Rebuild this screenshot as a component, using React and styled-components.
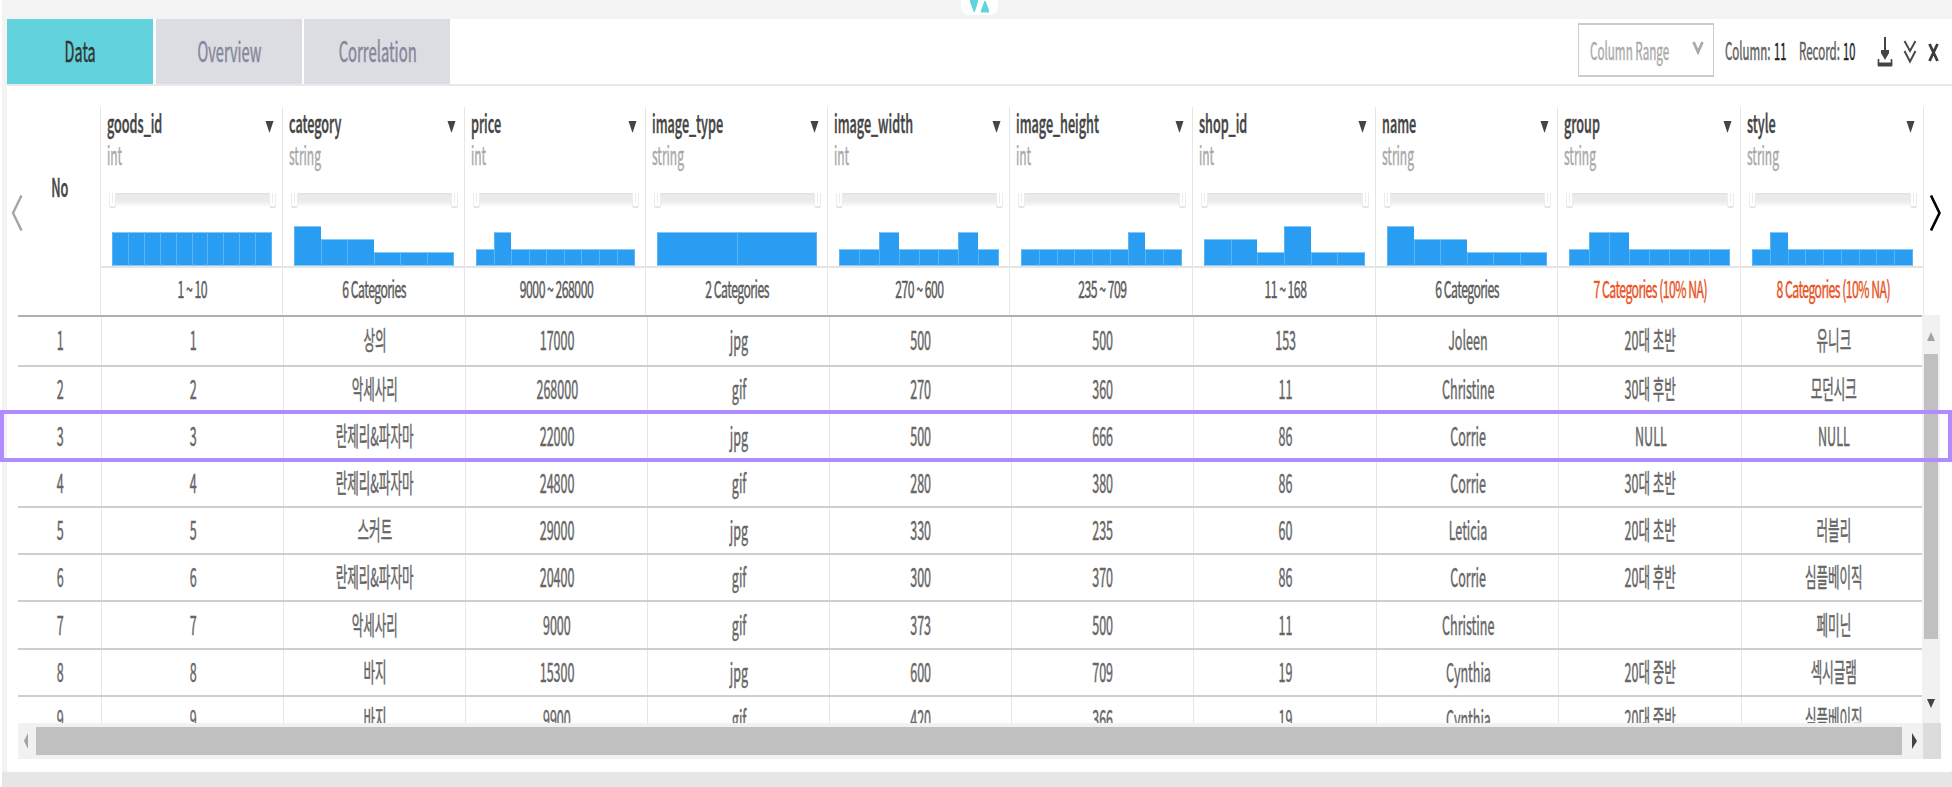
import React from "react";
import styled, { createGlobalStyle } from "styled-components";

const GlobalStyle = createGlobalStyle`
  * { box-sizing: border-box; }
  body {
    margin: 0;
    background: #fff;
    font-family: "Noto Sans CJK KR", "Noto Sans", sans-serif;
    overflow: hidden;
  }
`;

const LOW = 17;
const HIGH = 34;
const columns = [
  { name: "goods_id", type: "int", range: "1 ~ 10", bars: Array(10).fill(HIGH) },
  { name: "category", type: "string", range: "6 Categories", bars: [40, 27, 27, 14, 14, 14] },
  { name: "price", type: "int", range: "9000 ~ 268000", bars: [LOW, HIGH, LOW, LOW, LOW, LOW, LOW, LOW, LOW] },
  { name: "image_type", type: "string", range: "2 Categories", bars: [HIGH, HIGH] },
  { name: "image_width", type: "int", range: "270 ~ 600", bars: [LOW, LOW, HIGH, LOW, LOW, LOW, HIGH, LOW] },
  { name: "image_height", type: "int", range: "235 ~ 709", bars: [LOW, LOW, LOW, LOW, LOW, LOW, HIGH, LOW, LOW] },
  { name: "shop_id", type: "int", range: "11 ~ 168", bars: [27, 27, 14, 40, 14, 14] },
  { name: "name", type: "string", range: "6 Categories", bars: [40, 27, 27, 14, 14, 14] },
  { name: "group", type: "string", range: "7 Categories (10% NA)", warn: true, bars: [LOW, HIGH, HIGH, LOW, LOW, LOW, LOW, LOW] },
  { name: "style", type: "string", range: "8 Categories (10% NA)", warn: true, bars: [LOW, HIGH, LOW, LOW, LOW, LOW, LOW, LOW, LOW] },
];

const rows = [
  ["1", "1", "상의", "17000", "jpg", "500", "500", "153", "Joleen", "20대 초반", "유니크"],
  ["2", "2", "악세사리", "268000", "gif", "270", "360", "11", "Christine", "30대 후반", "모던시크"],
  ["3", "3", "란제리&파자마", "22000", "jpg", "500", "666", "86", "Corrie", "NULL", "NULL"],
  ["4", "4", "란제리&파자마", "24800", "gif", "280", "380", "86", "Corrie", "30대 초반", ""],
  ["5", "5", "스커트", "29000", "jpg", "330", "235", "60", "Leticia", "20대 초반", "러블리"],
  ["6", "6", "란제리&파자마", "20400", "gif", "300", "370", "86", "Corrie", "20대 후반", "심플베이직"],
  ["7", "7", "악세사리", "9000", "gif", "373", "500", "11", "Christine", "", "페미닌"],
  ["8", "8", "바지", "15300", "jpg", "600", "709", "19", "Cynthia", "20대 중반", "섹시글램"],
  ["9", "9", "바지", "9900", "gif", "420", "366", "19", "Cynthia", "20대 중반", "심플베이직"],
];

const Screen = styled.div`
  position: relative;
  width: 1952px;
  height: 787px;
  padding-left: 2px;
  display: flex;
  flex-direction: column;
  overflow: hidden;
`;

const TopStrip = styled.div`
  height: 19px;
  flex: none;
  background: #f3f3f3;
  padding-left: 959px;
`;

const SplitHandle = styled.div`
  width: 37px;
  height: 15px;
  background: #fff;
  border-radius: 0 0 8px 8px;
  svg { display: block; }
`;

const Middle = styled.div`
  flex: none;
  height: 753px;
  padding-left: 5px;
  background: #f3f3f3;
`;

const Panel = styled.div`
  height: 100%;
  background: #fff;
  border-radius: 0 0 4px 4px;
  display: flex;
  flex-direction: column;
`;

const BottomStrip = styled.div`
  flex: 1;
  background: #e6e6e6;
`;

const Toolbar = styled.div`
  display: flex;
  flex: none;
  height: 67px;
  border-bottom: 2px solid #e9e9e9;
`;

const Condensed = styled.span`
  display: inline-block;
  white-space: nowrap;
  flex: none;
  font-size: ${(p) => p.$size}px;
  line-height: 1;
  color: ${(p) => p.$color};
  font-weight: ${(p) => p.$weight || 400};
  letter-spacing: ${(p) => p.$spacing || 0}px;
  -webkit-text-stroke: 0.5px ${(p) => p.$color};
  transform: scaleX(${(p) => p.$scale || 0.5});
  transform-origin: ${(p) => p.$origin || "center"};
`;

const Tab = styled.div`
  width: 146px;
  height: 65px;
  margin-right: 2.5px;
  padding: 0 0 4px 1px;
  display: flex;
  align-items: center;
  justify-content: center;
  background: ${(p) => (p.$active ? "#62d3dc" : "#dcdde3")};
`;

const Tools = styled.div`
  margin-left: auto;
  display: flex;
  width: 374px;
`;

const RangeSelect = styled.div`
  width: 136px;
  flex: none;
  height: 54px;
  margin-top: 4px;
  border: 1px solid #ccc;
  border-width: 2px 1px;
  display: flex;
  align-items: center;
  padding: 0 10px 1px 11px;
  svg { flex: none; margin-bottom: 3px; }
`;

const LabelSlot = styled.div`
  width: ${(p) => p.$w}px;
  flex: none;
  display: flex;
`;

const Counter = styled.div`
  flex: none;
  display: flex;
  align-items: center;
  padding-bottom: 3px;
  margin-left: ${(p) => p.$gap}px;
`;

const IconButton = styled.div`
  width: ${(p) => p.$w}px;
  margin-left: ${(p) => p.$gap}px;
  flex: none;
  padding-top: ${(p) => p.$top}px;
  svg { display: block; }
`;

const HeaderArea = styled.div`
  flex: none;
  display: flex;
  height: 229px;
  padding-top: 21px;
`;

const PageArrow = styled.div`
  width: ${(p) => p.$w}px;
  flex: none;
  padding: 88px 0 0 ${(p) => p.$pad}px;
  svg { display: block; }
`;

const HeaderGrid = styled.div`
  display: grid;
  grid-template-columns: 83px 182px 182px 181px 182px 182px 183px 183px 182px 183px 183px;
  height: 208px;
`;

const NoHeader = styled.div`
  border-right: 1px solid #e6e6e6;
  padding: 67px 0 0 2px;
  display: flex;
  justify-content: center;
  align-items: flex-start;
`;

const ColumnHeader = styled.div`
  border-right: 1px solid #e6e6e6;
  display: flex;
  flex-direction: column;
  min-width: 0;
`;

const NameRow = styled.div`
  display: flex;
  justify-content: space-between;
  height: 32px;
  padding: 3px 8px 0 5.5px;
  svg { flex: none; margin-top: 11px; }
  span { width: 0; }
`;

const TypeRow = styled.div`
  height: 54px;
  padding: 3px 0 0 5.5px;
  display: flex;
`;

const Slider = styled.div`
  height: 16px;
  margin: 0 6px 0 8px;
  display: flex;
`;

const SliderTrack = styled.div`
  flex: 1;
  height: 13px;
  background: linear-gradient(#e0e0e0, #ebebeb 20%, #ebebeb 60%, #fafafa);
`;

const SliderThumb = styled.div`
  width: 7px;
  height: 15px;
  background: linear-gradient(90deg, transparent 40%, #ececec 40%, #ececec 60%, transparent 60%) no-repeat 0 0 / 100% 10px;
  border: 1px solid #ececec;
  border-top: none;
  border-bottom: 2px solid #e4e4e4;
  border-radius: 0 0 2px 2px;
`;

const Histogram = styled.div`
  height: 59px;
  padding: 0 10px 0 11px;
  display: flex;
  align-items: flex-end;
  border-bottom: 2px solid #e4e4e4;
`;

const Bar = styled.div`
  flex: 1;
  height: ${(p) => p.$h}px;
  background: #289df1;
  border-top: 1px solid #86c8f7;
  border-bottom: 1px solid #8ccbf8;
  border-left: 1px solid #5db4f4;
  &:last-child { border-right: 1px solid #5db4f4; }
`;

const RangeText = styled.div`
  flex: 1;
  display: flex;
  justify-content: center;
  align-items: center;
  padding: 0 0 6px 2px;
`;

const TableArea = styled.div`
  flex: none;
  width: 1923px;
  margin-left: 11px;
  display: flex;
  height: 408px;
`;

const Body = styled.div`
  width: 1904px;
  height: 408px;
  overflow: hidden;
  box-shadow: inset 0 2px 0 #b0b0b0;
  padding-top: 2px;
`;

const Row = styled.div`
  display: grid;
  grid-template-columns: 84px 182px 182px 182px 182px 182px 182px 183px 182px 183px 180px;
  height: ${(p) => (p.$first ? 50 : 47.1)}px;
  border-bottom: 2px solid #cecece;
`;

const Cell = styled.div`
  border-right: 1px solid #e6e6e6;
  display: flex;
  justify-content: center;
  align-items: center;
  padding: 0 0 ${(p) => (p.$first ? 5 : 3)}px 1px;
  min-width: 0;
  &:last-child { border-right: 0; padding-left: 3px; }
`;

const VScroll = styled.div`
  width: 18px;
  background: #f1f1f1;
  display: flex;
  flex-direction: column;
  align-items: center;
  padding-top: 17px;
  svg { flex: none; }
`;

const VThumb = styled.div`
  width: 14px;
  height: 285px;
  margin: 13px 0 60px;
  background: #c0c0c0;
`;

const HScroll = styled.div`
  flex: none;
  width: 1923px;
  height: 36px;
  margin-left: 11px;
  display: flex;
  align-items: center;
  background: #f1f1f1;
`;

const ScrollArrow = styled.div`
  width: ${(p) => p.$w}px;
  padding-left: ${(p) => p.$pad}px;
  flex: none;
  svg { display: block; }
`;

const HThumb = styled.div`
  flex: 1;
  height: 28px;
  background: #c0c0c0;
`;

const ScrollCorner = styled.div`
  width: 18px;
  height: 36px;
  background: #dcdcdc;
`;

const RowHighlight = styled.div`
  position: absolute;
  left: 0;
  top: 410px;
  width: 1952px;
  height: 52px;
  border: 4px solid #b18cff;
`;

const Triangle = ({ w, h, points, fill }) => (
  <svg width={w} height={h} viewBox={`0 0 ${w} ${h}`}>
    <polygon points={points} fill={fill} />
  </svg>
);

const Column = ({ column }) => (
  <ColumnHeader>
    <NameRow>
      <Condensed $size={25} $scale={0.505} $color="#444" $weight={500} $origin="left">{column.name}</Condensed>
      <Triangle w={9} h={12} points="0.5,0 8.5,0 4.5,12" fill="#444" />
    </NameRow>
    <TypeRow>
      <Condensed $size={25} $scale={0.48} $color="#a8a8a8" $origin="left">{column.type}</Condensed>
    </TypeRow>
    <Slider>
      <SliderThumb />
      <SliderTrack />
      <SliderThumb />
    </Slider>
    <Histogram>
      {column.bars.map((h, i) => <Bar key={i} $h={h} />)}
    </Histogram>
    <RangeText>
      <Condensed
        $size={23.5}
        $scale={0.52}
        $spacing={-1}
        $color={column.warn ? "#e8541f" : "#5c5c5c"}
      >
        {column.range}
      </Condensed>
    </RangeText>
  </ColumnHeader>
);

export default function App() {
  return (
    <Screen>
      <GlobalStyle />
      <TopStrip>
        <SplitHandle>
          <svg width="37" height="15">
            <polygon points="9,0 17,0 17,2 13.8,12 12.8,12 9,2" fill="#62d3dc" />
            <polygon points="20,12.5 20,10 23.5,1 24.5,1 28,10 28,12.5" fill="#62d3dc" />
          </svg>
        </SplitHandle>
      </TopStrip>
      <Middle>
        <Panel>
          <Toolbar>
            <Tab $active><Condensed $size={28} $scale={0.515} $color="#333">Data</Condensed></Tab>
            <Tab><Condensed $size={28} $scale={0.52} $color="#85879a">Overview</Condensed></Tab>
            <Tab><Condensed $size={28} $scale={0.53} $color="#85879a">Correlation</Condensed></Tab>
            <Tools>
              <RangeSelect>
                <LabelSlot $w={102}>
                  <Condensed $size={24} $scale={0.485} $color="#aaa" $origin="left">Column Range</Condensed>
                </LabelSlot>
                <svg width="12" height="15" viewBox="0 0 12 15" fill="none">
                  <path d="M1.5 1 L6 11 L10.5 1" stroke="#aaa" strokeWidth="2.8" />
                </svg>
              </RangeSelect>
              <Counter $gap={11}>
                <LabelSlot $w={49}>
                  <Condensed $size={24} $scale={0.48} $color="#606060" $origin="left">Column:</Condensed>
                </LabelSlot>
                <LabelSlot $w={13}>
                  <Condensed $size={24} $scale={0.46} $color="#222" $origin="left">11</Condensed>
                </LabelSlot>
              </Counter>
              <Counter $gap={12}>
                <LabelSlot $w={44}>
                  <Condensed $size={24} $scale={0.48} $color="#606060" $origin="left">Record:</Condensed>
                </LabelSlot>
                <LabelSlot $w={13}>
                  <Condensed $size={24} $scale={0.46} $color="#222" $origin="left">10</Condensed>
                </LabelSlot>
              </Counter>
              <IconButton $w={16} $gap={21} $top={17}>
                <svg width="16" height="32" viewBox="0 0 16 32" fill="none" stroke="#444">
                  <path d="M8 1 V18" strokeWidth="2" />
                  <path d="M4 14 H12 V17 L8 24 L4 17 Z" fill="#444" stroke="none" />
                  <path d="M1.5 23 V28.5 H14.5 V23" strokeWidth="1.6" />
                  <path d="M0.8 28.5 H15.2" strokeWidth="4" />
                </svg>
              </IconButton>
              <IconButton $w={14} $gap={10} $top={21}>
                <svg width="14" height="24" viewBox="0 0 14 24" fill="none" stroke="#4a4a4a" strokeWidth="2">
                  <path d="M1.5 1 L7 11 L12.5 1" />
                  <path d="M1.5 11 L7 21.5 L12.5 11" />
                </svg>
              </IconButton>
              <IconButton $w={11} $gap={11} $top={24}>
                <svg width="11" height="19" viewBox="0 0 11 19" stroke="#3c3c3c" strokeWidth="2.8">
                  <path d="M1.5 1 L9.5 18 M9.5 1 L1.5 18" />
                </svg>
              </IconButton>
            </Tools>
          </Toolbar>
          <HeaderArea>
            <PageArrow $w={11} $pad={4}>
              <svg width="13" height="36" viewBox="0 0 13 36" fill="none">
                <path d="M10.5 0.5 L2 18 L10.5 35.5" stroke="#a5a5a5" strokeWidth="2.4" />
              </svg>
            </PageArrow>
            <HeaderGrid>
              <NoHeader><Condensed $size={25} $scale={0.51} $color="#444" $weight={500}>No</Condensed></NoHeader>
              {columns.map((c) => <Column key={c.name} column={c} />)}
            </HeaderGrid>
            <PageArrow $w={28} $pad={6}>
              <svg width="13" height="36" viewBox="0 0 13 36" fill="none">
                <path d="M1 0.5 L9.5 18 L1 35.5" stroke="#000" strokeWidth="2.6" />
              </svg>
            </PageArrow>
          </HeaderArea>
          <TableArea>
            <Body>
              {rows.map((r, i) => (
                <Row key={r[0]} $first={i === 0}>
                  {r.map((v, j) => (
                    <Cell key={j} $first={i === 0}>
                      <Condensed $size={26} $scale={0.482} $color="#666">{v}</Condensed>
                    </Cell>
                  ))}
                </Row>
              ))}
            </Body>
            <VScroll>
              <Triangle w={8} h={9} points="0,9 4,0 8,9" fill="#a3a3a3" />
              <VThumb />
              <Triangle w={8} h={9} points="0,0 8,0 4,9" fill="#444" />
            </VScroll>
          </TableArea>
          <HScroll>
            <ScrollArrow $w={18} $pad={6}><Triangle w={4} h={16} points="4,0 4,16 0,8" fill="#a3a3a3" /></ScrollArrow>
            <HThumb />
            <ScrollArrow $w={21} $pad={10}><Triangle w={5} h={16} points="0,0 5,8 0,16" fill="#444" /></ScrollArrow>
            <ScrollCorner />
          </HScroll>
        </Panel>
      </Middle>
      <BottomStrip />
      <RowHighlight />
    </Screen>
  );
}
